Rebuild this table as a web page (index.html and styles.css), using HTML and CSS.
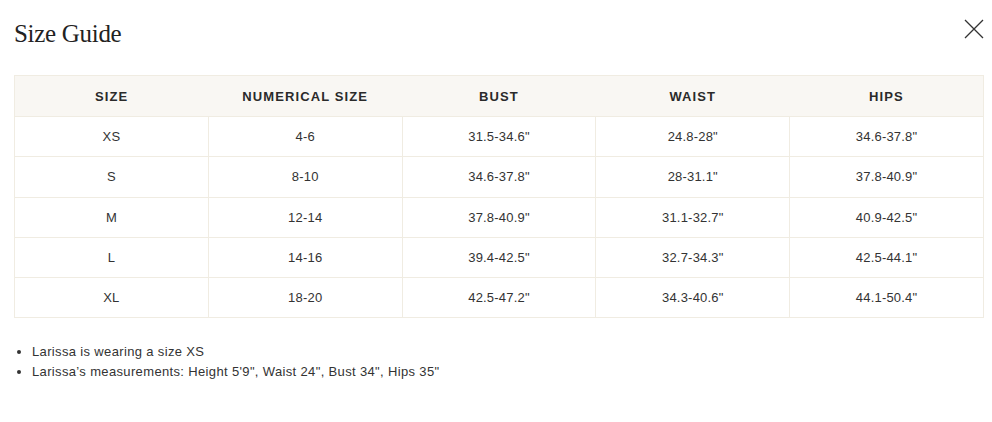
FILE: index.html
```html
<!DOCTYPE html>
<html>
<head>
<meta charset="utf-8">
<link rel="stylesheet" href="styles.css">
</head>
<body>
<div class="modal">
  <div class="head">
    <h1 class="title">Size Guide</h1>
    <button class="close" aria-label="Close">
      <svg width="20" height="20" viewBox="0 0 20 20"><path d="M1 1L19 19M19 1L1 19" stroke="#333" stroke-width="1.3" fill="none"/></svg>
    </button>
  </div>
  <table class="sizes">
    <thead>
      <tr><th>SIZE</th><th>NUMERICAL SIZE</th><th>BUST</th><th>WAIST</th><th>HIPS</th></tr>
    </thead>
    <tbody>
      <tr><td>XS</td><td>4-6</td><td>31.5-34.6"</td><td>24.8-28"</td><td>34.6-37.8"</td></tr>
      <tr><td>S</td><td>8-10</td><td>34.6-37.8"</td><td>28-31.1"</td><td>37.8-40.9"</td></tr>
      <tr><td>M</td><td>12-14</td><td>37.8-40.9"</td><td>31.1-32.7"</td><td>40.9-42.5"</td></tr>
      <tr><td>L</td><td>14-16</td><td>39.4-42.5"</td><td>32.7-34.3"</td><td>42.5-44.1"</td></tr>
      <tr><td>XL</td><td>18-20</td><td>42.5-47.2"</td><td>34.3-40.6"</td><td>44.1-50.4"</td></tr>
    </tbody>
  </table>
  <ul class="notes">
    <li>Larissa is wearing a size XS</li>
    <li>Larissa’s measurements: Height 5'9", Waist 24", Bust 34", Hips 35"</li>
  </ul>
</div>
</body>
</html>
```
FILE: styles.css
```css
html, body { margin: 0; padding: 0; background: #fff; }
body { font-family: "Liberation Sans", Arial, sans-serif; color: #2b2b2b; }
.modal { padding: 0 8px 0 14px; }
.head { display: flex; justify-content: space-between; align-items: flex-start; height: 75px; }
.title { margin: 0; padding-top: 19px; font-family: "Liberation Serif", "Times New Roman", serif; font-weight: 400; font-size: 25px; line-height: 30px; color: #222; letter-spacing: -0.3px; }
.close { border: 0; background: none; padding: 0; margin: 19px 0 0 0; width: 20px; height: 20px; cursor: pointer; }
.close svg { display: block; }
.sizes { width: 970px; border-collapse: collapse; table-layout: fixed; font-size: 13px; }
.sizes th { background: #f9f7f3; height: 40px; padding: 0; font-weight: 700; letter-spacing: 1.1px; color: #2a2a2a; border-top: 1px solid #f0ece2; text-align: center; }
.sizes th:first-child { border-left: 1px solid #f0ece2; }
.sizes th:last-child { border-right: 1px solid #f0ece2; }
.sizes td { height: 39.3px; padding: 0; text-align: center; border: 1px solid #f0ece2; color: #333; letter-spacing: 0.2px; }
.notes { margin: 24px 0 0; padding-left: 18px; font-size: 13px; line-height: 20px; color: #333; letter-spacing: 0.35px; }
```
